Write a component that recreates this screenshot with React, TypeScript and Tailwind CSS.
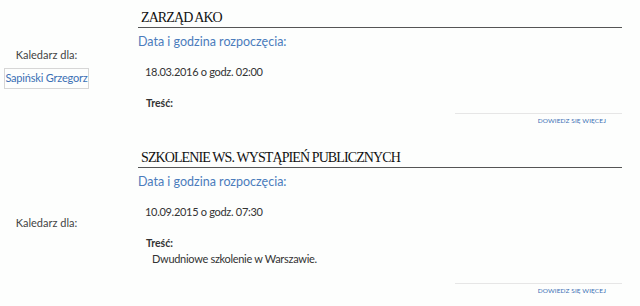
const EVENTS = [
  {
    title: "ZARZĄD AKO",
    date: "18.03.2016 o godz. 02:00",
    body: "",
    person: "Sapiński Grzegorz",
  },
  {
    title: "SZKOLENIE WS. WYSTĄPIEŃ PUBLICZNYCH",
    date: "10.09.2015 o godz. 07:30",
    body: "Dwudniowe szkolenie w Warszawie.",
    person: "",
  },
];

function EventRow({ title, date, body, person }: (typeof EVENTS)[number]) {
  return (
    <div className="flex items-center">
      {/* Calendar owner */}
      <div className="w-[93px] shrink-0 flex flex-col items-center text-[11px] text-[#444]">
        <span className="leading-[16px]">Kaledarz dla:</span>
        {person && (
          <span className="mt-[5px] w-[85px] h-[21px] flex items-center justify-center whitespace-nowrap border border-[#d6d6d6] text-[#3a6fb4] tracking-[-0.2px]">
            {person}
          </span>
        )}
      </div>

      {/* Event details */}
      <div className="ml-[45px] w-[484px] flex flex-col">
        <h2
          className="pl-[3px] h-[19px] leading-[18px] border-b border-[#555] text-[14px] text-[#111] tracking-[-0.9px]"
          style={{ fontFamily: '"Liberation Serif", serif' }}
        >
          {title}
        </h2>
        <div className="mt-[5px] text-[12.5px] leading-[18px] text-[#4b7cbc]">Data i godzina rozpoczęcia:</div>
        <div className="mt-[13px] ml-[7px] text-[11px] leading-[16px] text-[#333] tracking-[-0.3px]">{date}</div>
        <div className="mt-[15px] ml-[8px] text-[10.5px] leading-[16px] font-bold text-[#333]">Treść:</div>
        {body && (
          <p className="ml-[14px] mb-[14px] text-[11px] leading-[16px] text-[#333] tracking-[-0.3px]">{body}</p>
        )}
        <div className="mt-[2px] ml-auto w-[167px] border-t border-[#e6e6e6]" />
        <div className="mt-[2px] pr-[16px] self-end text-[6.5px] leading-[10px] text-[#3a6fb4] tracking-[0.1px]">
          DOWIEDZ SIĘ WIĘCEJ
        </div>
      </div>
    </div>
  );
}

export default function App() {
  return (
    <div
      className="w-[640px] h-[306px] bg-[#fdfefd] pt-[9px] flex flex-col gap-[23px]"
      style={{ fontFamily: 'Lato, "Liberation Sans", sans-serif' }}
    >
      {EVENTS.map((e) => (
        <EventRow key={e.title} {...e} />
      ))}
    </div>
  );
}
